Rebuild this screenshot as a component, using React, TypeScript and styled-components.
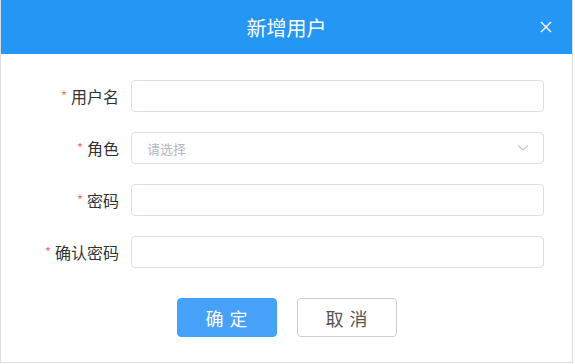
import React from 'react';
import styled, { createGlobalStyle } from 'styled-components';

const GlobalStyle = createGlobalStyle`
  html, body {
    margin: 0;
    padding: 0;
    background: #ffffff;
  }
  body {
    font-family: "Microsoft YaHei", "Noto Sans CJK SC", "Liberation Sans", sans-serif;
  }
`;

const Dialog = styled.div`
  width: 571px;
  height: 362px;
  background: #fff;
  border: 1px solid #dcdcdc;
  border-top: none;
  display: flex;
  flex-direction: column;
`;

const Header = styled.div`
  height: 54px;
  background: #2397f3;
  display: flex;
  align-items: center;
  justify-content: center;
  position: relative;
  color: #fff;
  font-size: 20px;
`;

const CloseBtn = styled.button`
  position: absolute;
  right: 18px;
  top: 19px;
  width: 16px;
  height: 16px;
  padding: 0;
  border: none;
  background: transparent;
  cursor: pointer;
  display: flex;
  align-items: center;
  justify-content: center;
`;

const Form = styled.div`
  display: flex;
  flex-direction: column;
  gap: 20px;
  padding: 26px 28px 0 0;
`;

const Row = styled.div`
  display: flex;
  align-items: center;
  height: 32px;
`;

const Label = styled.label`
  width: 130px;
  padding-right: 12px;
  box-sizing: border-box;
  text-align: right;
  font-size: 16px;
  color: #333;
  flex-shrink: 0;
`;

const Star = styled.span`
  color: #f26f6f;
  margin-right: 4px;
  font-size: 13px;
  position: relative;
  top: -2px;
`;

const Input = styled.div`
  flex: 1;
  height: 32px;
  box-sizing: border-box;
  border: 1px solid #dcdfe6;
  border-radius: 4px;
  display: flex;
  align-items: center;
  justify-content: space-between;
  padding: 0 14px 0 15px;
  font-size: 13px;
  color: #b4b7bd;
`;

const Footer = styled.div`
  display: flex;
  justify-content: center;
  gap: 20px;
  padding: 30px 0 0 0;
`;

const Button = styled.button<{ $primary?: boolean }>`
  width: 100px;
  height: 39px;
  box-sizing: border-box;
  border-radius: 4px;
  font-family: inherit;
  font-size: 18px;
  letter-spacing: 6px;
  padding: 0 0 0 6px;
  border: 1px solid ${({ $primary }) => ($primary ? '#45a2f8' : '#cfcfcf')};
  background: ${({ $primary }) => ($primary ? '#45a2f8' : '#fff')};
  color: ${({ $primary }) => ($primary ? '#fff' : '#555')};
  cursor: pointer;
`;

const fields = [
  { label: '用户名' },
  { label: '角色', select: true },
  { label: '密码' },
  { label: '确认密码' },
];

export default function App() {
  return (
    <>
      <GlobalStyle />
      <Dialog>
        <Header>
          新增用户
          <CloseBtn aria-label="close">
            <svg width="12" height="12" viewBox="0 0 12 12">
              <path d="M1 1 L11 11 M11 1 L1 11" stroke="#fff" strokeWidth="1.4" fill="none" />
            </svg>
          </CloseBtn>
        </Header>
        <Form>
          {fields.map((f) => (
            <Row key={f.label}>
              <Label>
                <Star>*</Star>
                {f.label}
              </Label>
              <Input>
                {f.select && (
                  <>
                    <span>请选择</span>
                    <svg width="12" height="8" viewBox="0 0 12 8">
                      <path d="M1 1.5 L6 6 L11 1.5" stroke="#c0c4cc" strokeWidth="1.2" fill="none" />
                    </svg>
                  </>
                )}
              </Input>
            </Row>
          ))}
        </Form>
        <Footer>
          <Button $primary>确定</Button>
          <Button>取消</Button>
        </Footer>
      </Dialog>
    </>
  );
}
